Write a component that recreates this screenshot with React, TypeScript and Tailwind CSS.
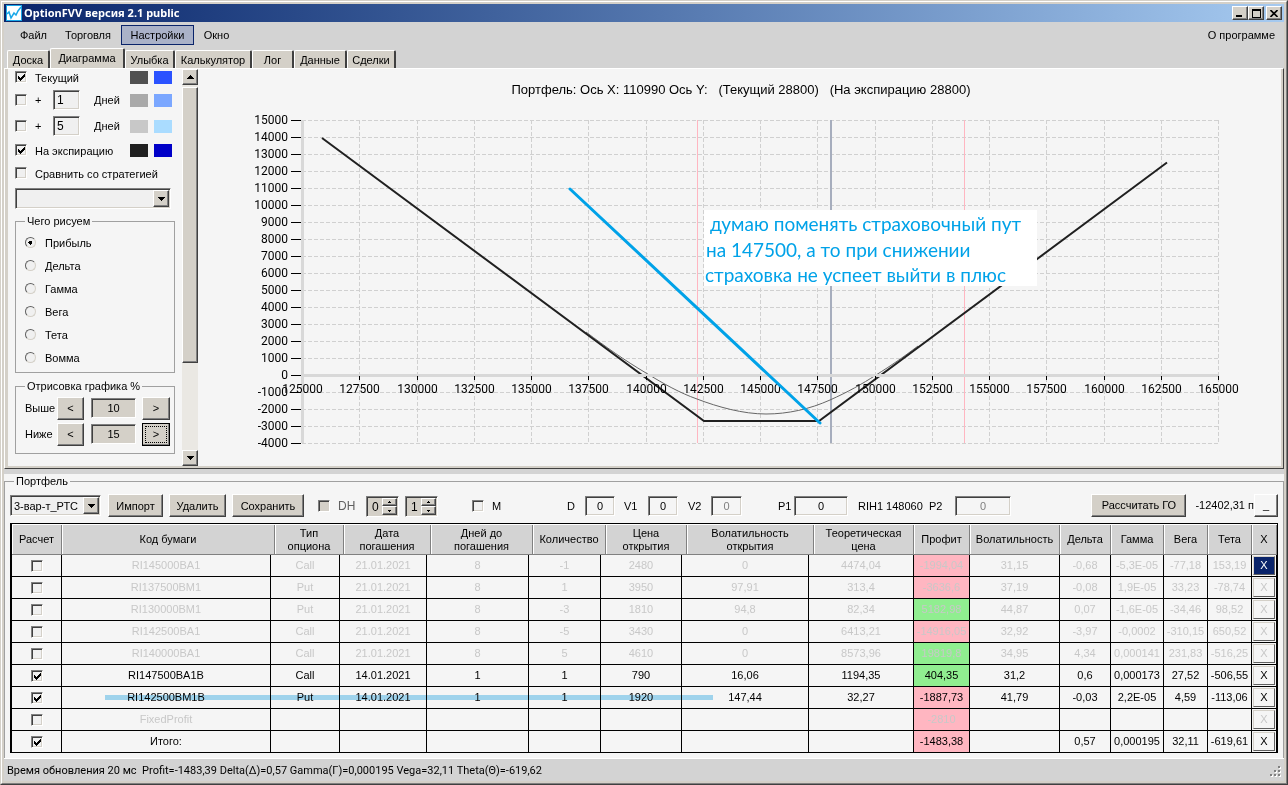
import { useState } from "react";
import type { ReactNode } from "react";
import clsx from "clsx";

type Row = {
  code: string;
  on: boolean;
  cells: string[];
  profit: string;
  tone: "loss" | "gain";
  greeks: string[];
};

// Positions of the portfolio, the last one is the total
const rows: Row[] = [
  { code: "RI145000BA1", on: false, cells: ["Call", "21.01.2021", "8", "-1", "2480", "0", "4474,04"], profit: "-1994,04", tone: "loss", greeks: ["31,15", "-0,68", "-5,3E-05", "-77,18", "153,19"] },
  { code: "RI137500BM1", on: false, cells: ["Put", "21.01.2021", "8", "1", "3950", "97,91", "313,4"], profit: "-3636,6", tone: "loss", greeks: ["37,19", "-0,08", "1,9E-05", "33,23", "-78,74"] },
  { code: "RI130000BM1", on: false, cells: ["Put", "21.01.2021", "8", "-3", "1810", "94,8", "82,34"], profit: "5182,98", tone: "gain", greeks: ["44,87", "0,07", "-1,6E-05", "-34,46", "98,52"] },
  { code: "RI142500BA1", on: false, cells: ["Call", "21.01.2021", "8", "-5", "3430", "0", "6413,21"], profit: "-14916,05", tone: "loss", greeks: ["32,92", "-3,97", "-0,0002", "-310,15", "650,52"] },
  { code: "RI140000BA1", on: false, cells: ["Call", "21.01.2021", "8", "5", "4610", "0", "8573,96"], profit: "19819,8", tone: "gain", greeks: ["34,95", "4,34", "0,000141", "231,83", "-516,25"] },
  { code: "RI147500BA1B", on: true, cells: ["Call", "14.01.2021", "1", "1", "790", "16,06", "1194,35"], profit: "404,35", tone: "gain", greeks: ["31,2", "0,6", "0,000173", "27,52", "-506,55"] },
  { code: "RI142500BM1B", on: true, cells: ["Put", "14.01.2021", "1", "1", "1920", "147,44", "32,27"], profit: "-1887,73", tone: "loss", greeks: ["41,79", "-0,03", "2,2E-05", "4,59", "-113,06"] },
  { code: "FixedProfit", on: false, cells: ["", "", "", "", "", "", ""], profit: "-2810", tone: "loss", greeks: ["", "", "", "", ""] },
  { code: "Итого:", on: true, cells: ["", "", "", "", "", "", ""], profit: "-1483,38", tone: "loss", greeks: ["", "0,57", "0,000195", "32,11", "-619,61"] },
];

const headers = [
  "Расчет", "Код бумаги", "Тип опциона", "Дата погашения", "Дней до погашения", "Количество",
  "Цена открытия", "Волатильность открытия", "Теоретическая цена", "Профит",
  "Волатильность", "Дельта", "Гамма", "Вега", "Тета", "X",
];

const tabs = [
  { name: "Доска", width: "w-[43px]" },
  { name: "Диаграмма", width: "w-[75px]" },
  { name: "Улыбка", width: "w-[50px]" },
  { name: "Калькулятор", width: "w-[77px]" },
  { name: "Лог", width: "w-[42px]" },
  { name: "Данные", width: "w-[53px]" },
  { name: "Сделки", width: "w-[49px]" },
];

const modes = ["Прибыль", "Дельта", "Гамма", "Вега", "Тета", "Вомма"];

const raised =
  "border border-t-white border-l-white border-r-[#404040] border-b-[#404040] shadow-[inset_-1px_-1px_#808080]";
const sunken =
  "border border-t-[#808080] border-l-[#808080] border-r-white border-b-white shadow-[inset_1px_1px_#404040,inset_-1px_-1px_#d4d0c8]";

function Button({ className, children, label }: { className?: string; children: ReactNode; label?: string }) {
  return (
    <button aria-label={label} className={clsx("flex shrink-0 items-center justify-center bg-[#d4d0c8]", raised, className)}>
      {children}
    </button>
  );
}

function Arrow({ up, small }: { up?: boolean; small?: boolean }) {
  return (
    <svg className={small ? "h-[2px] w-[3px]" : "h-1 w-[7px]"} viewBox="0 0 7 4" preserveAspectRatio="none" shapeRendering="crispEdges">
      <path d={up ? "M0 4h7L3.5 0z" : "M0 0h7L3.5 4z"} />
    </svg>
  );
}

function Check({ label, checked, gray }: { label: string; checked?: boolean; gray?: boolean }) {
  return (
    <span className="relative flex size-3 shrink-0">
      <input
        type="checkbox"
        aria-label={label}
        defaultChecked={checked}
        className={clsx("peer size-3 appearance-none", gray ? "bg-[#d4d0c8]" : "bg-[#f0f0f0]", sunken)}
      />
      <svg className="pointer-events-none absolute inset-0 hidden size-3 peer-checked:block" viewBox="0 0 12 12" shapeRendering="crispEdges">
        <path d="M3 5h1v3H3zM4 6h1v3H4zM5 7h1v3H5zM6 6h1v3H6zM7 5h1v3H7zM8 4h1v3H8zM9 3h1v3H9z" />
      </svg>
    </span>
  );
}

function Field({ label, value, className }: { label: string; value: string; className?: string }) {
  return <input aria-label={label} defaultValue={value} className={clsx("min-w-0 shrink-0 text-center", sunken, className)} />;
}

function Combo({ label, value, className }: { label: string; value: string; className?: string }) {
  return (
    <span className={clsx("relative flex h-[21px] shrink-0", className)}>
      <select aria-label={label} className={clsx("w-full appearance-none bg-[#f0f0f0] pl-[3px]", sunken)}>
        <option>{value}</option>
      </select>
      <span className={clsx("pointer-events-none absolute inset-y-0.5 right-0.5 flex w-4 items-center justify-center bg-[#d4d0c8]", raised)}>
        <Arrow />
      </span>
    </span>
  );
}

function Spinner({ label, value }: { label: string; value: string }) {
  return (
    <span className={clsx("flex h-[21px] w-[33px] shrink-0 bg-[#d4d0c8] p-px", sunken)}>
      <input aria-label={label} defaultValue={value} className="w-[14px] pl-1" />
      <span className="flex w-[15px] flex-col">
        <Button label="Больше" className="h-2 w-full"><Arrow up small /></Button>
        <Button label="Меньше" className="h-[9px] w-full"><Arrow small /></Button>
      </span>
    </span>
  );
}

function Swatches({ a, b }: { a: string; b: string }) {
  return (
    <span className="absolute left-[122px] flex gap-[6px]">
      <span className={clsx("h-[13px] w-[18px]", a)} />
      <span className={clsx("h-[13px] w-[18px]", b)} />
    </span>
  );
}

function Sidebar() {
  const [mode, setMode] = useState(modes[0]);

  return (
    <div className="flex shrink-0">
      <div className="w-[174px] overflow-hidden pr-2 pl-[7px]">
        <div className="relative -ml-[7px] flex h-4 items-center gap-2 pl-[7px]">
          <Check label="Текущий" checked />
          <span className="pt-[2px]">Текущий</span>
          <Swatches a="bg-[#505050]" b="bg-[#2a52ff]" />
        </div>
        {[
          { days: "1", a: "bg-[#a9a9a9]", b: "bg-[#7ba7ff]" },
          { days: "5", a: "bg-[#c8c8c8]", b: "bg-[#aadcff]" },
        ].map(d => (
          <div key={d.days} className="relative -ml-[7px] mt-1 flex h-[22px] items-center pl-[7px]">
            <Check label={`+ ${d.days} Дней`} />
            <span className="w-[26px] pl-2">+</span>
            <input aria-label="Дней" defaultValue={d.days} className={clsx("h-5 w-[27px] bg-[#f0f0f0] pl-[3px] text-[12px]", sunken)} />
            <span className="pl-[14px]">Дней</span>
            <Swatches a={d.a} b={d.b} />
          </div>
        ))}
        <div className="relative mt-1 -ml-[7px] flex h-[18px] items-center gap-2 pl-[7px]">
          <Check label="На экспирацию" checked />
          <span className="pt-[2px]">На экспирацию</span>
          <Swatches a="bg-[#202020]" b="bg-[#0000c8]" />
        </div>
        <div className="mt-[7px] flex h-[14px] items-center gap-2 whitespace-nowrap">
          <Check label="Сравнить со стратегией" />
          <span className="pt-[2px]">Сравнить со стратегией</span>
        </div>
        <Combo label="Стратегия" value="" className="mt-[8px] w-[156px]" />

        <fieldset className="mt-[6px] h-[158px] w-[160px] border border-[#a0a0a0] pl-[9px]">
          <legend className="h-3 px-[2px] leading-3">Чего рисуем</legend>
          <div className="pt-1">
            {modes.map(m => (
              <label key={m} className="flex h-[23px] items-center gap-[9px]">
                <input
                  type="radio"
                  name="mode"
                  checked={mode === m}
                  onChange={() => setMode(m)}
                  className="size-[11px] appearance-none rounded-full border border-t-[#606060] border-r-[#d4d0c8] border-b-[#d4d0c8] border-l-[#606060] bg-[#f0f0f0] checked:bg-[radial-gradient(circle,#000_2px,#f0f0f0_2px)]"
                />
                {m}
              </label>
            ))}
          </div>
        </fieldset>

        <fieldset className="mt-[7px] h-[74px] w-[160px] border border-[#a0a0a0] pl-[9px]">
          <legend className="h-3 px-[2px] leading-3">Отрисовка графика %</legend>
          <div className="pt-[3px]">
            {[
              { name: "Выше", value: "10" },
              { name: "Ниже", value: "15" },
            ].map(r => (
              <div key={r.name} className="flex h-[26px] items-center">
                <span className="w-[32px]">{r.name}</span>
                <Button className="h-[23px] w-[27px]">&lt;</Button>
                <Field label={r.name} value={r.value} className="mr-[6px] ml-[7px] h-5 w-[45px] bg-[#d4d0c8]" />
                <Button className={clsx("h-[23px] w-[28px]", r.value === "15" && "outline outline-1 -outline-offset-1 outline-black")}>
                  <span className={clsx("flex h-[17px] w-[22px] items-center justify-center", r.value === "15" && "border border-dotted border-black")}>&gt;</span>
                </Button>
              </div>
            ))}
          </div>
        </fieldset>
      </div>
      <div className="flex w-4 flex-col bg-[#eae8e3]">
        <Button label="Вверх" className="h-4 w-full"><Arrow up /></Button>
        <div className={clsx("mt-[2px] h-[276px] bg-[#d4d0c8]", raised)} />
        <Button label="Вниз" className="mt-auto h-4 w-full"><Arrow /></Button>
      </div>
    </div>
  );
}

function Chart() {
  const xs = Array.from({ length: 17 }, (_, i) => i);
  const ys = Array.from({ length: 20 }, (_, i) => i);
  const px = (i: number) => Math.round(104 + i * 57.25) + 0.5;
  const py = (i: number) => 51.5 + i * 17;

  return (
    <svg className="min-w-0 flex-1 font-['Roboto',sans-serif] text-[12px]" viewBox="0 0 1083 397" role="img" aria-label="Портфель">
      <text x="543" y="25" textAnchor="middle" className="font-['Liberation_Sans',sans-serif] text-[13px]">
        {"Портфель: Ось X: 110990 Ось Y:\u00a0\u00a0 (Текущий 28800)\u00a0\u00a0 (На экспирацию 28800)"}
      </text>
      <g stroke="#d0d0d0" strokeDasharray="4 2" shapeRendering="crispEdges">
        {ys.map(i => <path key={i} d={`M104 ${py(i)}H1020`} />)}
        {xs.map(i => <path key={i} d={`M${px(i)} 51V374`} />)}
      </g>
      <path d="M499.5 51V374M766.5 51V374" stroke="#ffb6c1" />
      <path d="M633 51V374" stroke="#a6adbd" strokeWidth="2" />
      {/* current profit */}
      <path
        d="M388 263C408 278 426 291 448 304C466 315 482 324 499 330C520 338 545 345 568 345C590 345 612 340 632 331C650 323 664 315 678 306C694 296 704 289 720 277"
        fill="none"
        stroke="#666"
      />
      {/* profit at expiration */}
      <path d="M124 69L506 352H621L969 93.500" fill="none" stroke="#202020" strokeWidth="2" />
      <path d="M104.500 51V374M104 306.500H1020" fill="none" stroke="#d8d8d8" strokeWidth="3" />
      <g stroke="#000">
        {ys.map(i => <path key={i} d={`M93 ${py(i)}H103`} />)}
        {xs.slice(1).map(i => <path key={i} d={`M${px(i)} 307V311`} />)}
      </g>
      <g fill="#000">
        {ys.map(i => (
          <text key={i} x="90" y={py(i) + 3} textAnchor="end">{(15 - i) * 1000}</text>
        ))}
        {xs.map(i => (
          <text key={i} x={px(i)} y="324" textAnchor="middle">{125000 + i * 2500}</text>
        ))}
      </g>
      <path d="M372 120L622 354" stroke="#00a2e8" strokeWidth="3" strokeLinecap="round" />
      <path d="M506 141H839V217H506z" fill="#fff" />
      <g fill="#00a2e8" className="font-['Lato',sans-serif] text-[19px]">
        <text x="512" y="162">думаю поменять страховочный пут</text>
        <text x="508" y="188">на 147500, а то при снижении</text>
        <text x="507" y="213">страховка не успеет выйти в плюс</text>
      </g>
    </svg>
  );
}

function PortfolioTable() {
  return (
    <div className="relative mx-[5px] mt-[6px] grow border-t border-r border-l-2 border-black bg-[#f5f5f5]">
      <table className="block">
        <thead className="block">
          <tr className="grid h-[31px] grid-cols-[50px_minmax(120px,1fr)_69px_87px_102px_73px_81px_127px_100px_56px_90px_51px_53px_44px_44px_25px] border-t border-b border-t-white border-b-[#808080] bg-[#d3d3d3]">
            {headers.map(h => (
              <th key={h} className="flex items-center justify-center border-r border-[#808080] px-1 text-center leading-[13px] font-normal shadow-[inset_1px_0_#fff]">
                {h.includes(" ") && h !== "Код бумаги" ? (
                  <span>
                    {h.slice(0, h.lastIndexOf(" "))}
                    <br />
                    {h.slice(h.lastIndexOf(" ") + 1)}
                  </span>
                ) : h}
              </th>
            ))}
          </tr>
        </thead>
        <tbody className="block">
          {rows.map((r, i) => (
            <tr
              key={r.code}
              className={clsx(
                "grid h-[22px] grid-cols-[50px_minmax(120px,1fr)_69px_87px_102px_72px_81px_127px_105px_56px_90px_51px_53px_44px_44px_25px] text-center leading-[21px] *:border-r *:border-b *:border-black",
                !r.on && "text-[#c8c8c8]"
              )}
            >
              <td className="flex items-center justify-center"><Check label={r.code} checked={r.on} /></td>
              <td>{r.code}</td>
              {r.cells.map((c, n) => <td key={n}>{c}</td>)}
              <td className={r.tone === "loss" ? "bg-[#ffb6c1]" : "bg-[#90ee90]"}>{r.profit}</td>
              {r.greeks.map((g, n) => <td key={n}>{g}</td>)}
              <td className="flex">
                <button
                  className={clsx(
                    "m-px grow border border-t-[#d4d0c8] border-r-[#606060] border-b-[#606060] border-l-[#d4d0c8] leading-[17px]",
                    i === 0 && "bg-[#0a246a] text-white"
                  )}
                >
                  X
                </button>
              </td>
            </tr>
          ))}
        </tbody>
      </table>
      {/* marker over the put that is going to be replaced */}
      <div className="pointer-events-none absolute top-[171px] left-[93px] h-[5px] w-[608px] bg-[#a6dcf6] mix-blend-multiply" />
    </div>
  );
}

export default function App() {
  return (
    <div className="flex min-h-screen flex-col border border-t-[#d4d0c8] border-r-[#404040] border-b-[#404040] border-l-[#d4d0c8] bg-[#d4d0c8] font-['Liberation_Sans',sans-serif] text-[11px] leading-[14px] text-black">
      <div className="flex grow flex-col border border-t-white border-r-[#808080] border-b-[#808080] border-l-white p-[2px]">
        {/* title bar */}
        <header className="flex h-[18px] items-center bg-linear-to-r from-[#0a246a] to-[#a6caf0] px-[2px]">
          <svg className="size-4" viewBox="0 0 16 16">
            <path fill="#1aa7e8" d="M0 0h16v16H0z" />
            <path fill="#fff" d="M1 1h14v14H1z" />
            <path d="M1 9l2-2 2 6 3-5 2 2 2-4 3-4" fill="none" stroke="#1aa7e8" strokeWidth="1.500" />
          </svg>
          <h1 className="pl-[2px] font-['Noto_Sans',sans-serif] font-bold text-white">OptionFVV версия 2.1 public</h1>
          <div className="ml-auto flex">
            <Button label="Свернуть" className="h-[14px] w-4">
              <svg className="size-2" viewBox="0 0 8 8"><path d="M0 6h6v2H0z" /></svg>
            </Button>
            <Button label="Развернуть" className="mr-[2px] h-[14px] w-4">
              <svg className="h-[9px] w-[9px]" viewBox="0 0 9 9" shapeRendering="crispEdges"><path d="M0 0h9v9H0zM1 2v6h7V2z" fillRule="evenodd" /></svg>
            </Button>
            <Button label="Закрыть" className="h-[14px] w-4">
              <svg className="h-[7px] w-2" viewBox="0 0 8 7"><path d="M.5 0l7 7M7.500 0l-7 7" stroke="#000" strokeWidth="1.600" /></svg>
            </Button>
          </div>
        </header>

        <nav className="flex h-[26px] items-center bg-[#d3d3d3] pr-[9px] pl-1">
          <button className="w-[48px] pl-[3px]">Файл</button>
          <button className="w-[64px]">Торговля</button>
          <button className="ml-[1px] h-5 w-[73px] border border-[#0a246a] bg-[#aab2c8]">Настройки</button>
          <button className="w-[45px]">Окно</button>
          <button className="ml-auto">О программе</button>
        </nav>

        <div role="tablist" className="flex h-5 items-end bg-[#d3d3d3] pl-[3px]">
          {tabs.map((t, i) => (
            <button
              key={t.name}
              role="tab"
              aria-selected={i === 1}
              className={clsx(
                "shrink-0 rounded-t-[2px] border-t border-r-2 border-l border-t-white border-r-[#404040] border-l-white bg-[#d4d0c8] text-center whitespace-nowrap",
                i === 1 ? "h-5 pb-[2px]" : "h-[18px]",
                t.width
              )}
            >
              {t.name}
            </button>
          ))}
        </div>

        <main className="flex grow flex-col">
          <section className="flex h-[401px] border border-t-white border-r-[#404040] border-b-[#404040] border-l-white bg-[#f5f5f5] shadow-[inset_-1px_-1px_#808080]">
            <div className="flex grow border-r-2 border-b-2 border-l-3 border-[#d4d0c8]">
              <Sidebar />
              <Chart />
            </div>
          </section>

          <div className="h-[5px] bg-[#d3d3d3]" />

          <section className="flex grow flex-col bg-[#f5f5f5]">
            <fieldset className="flex min-w-0 grow flex-col border border-b-0 border-[#a0a0a0]">
              <legend className="ml-[9px] h-[14px] px-[2px]">Портфель</legend>
              <div className="flex h-[29px] items-end overflow-hidden px-[5px]">
                <div className="flex items-center">
                  <Combo label="Портфель" value="3-вар-т_РТС" className="mr-[7px] w-[91px]" />
                  <Button className="mr-[6px] h-[23px] w-[55px]">Импорт</Button>
                  <Button className="mr-[6px] h-[23px] w-[57px]">Удалить</Button>
                  <Button className="h-[23px] w-[72px]">Сохранить</Button>
                </div>
                <div className="ml-[14px] flex h-[23px] shrink-0 items-center text-[#606060]">
                  <Check label="DH" gray />
                  <span className="w-[36px] pl-2 text-[12px]">DH</span>
                </div>
                <div className="flex gap-[6px] text-[12px]">
                  <Spinner label="DH от" value="0" />
                  <Spinner label="DH до" value="1" />
                </div>
                <div className="ml-[34px] flex h-[23px] items-center">
                  <Check label="M" />
                  <span className="w-[83px] pl-2">M</span>
                  <span className="w-[18px]">D</span>
                  <Field label="D" value="0" className="mr-[9px] h-5 w-[30px]" />
                  <span className="w-[24px]">V1</span>
                  <Field label="V1" value="0" className="mr-[10px] h-5 w-[30px]" />
                  <span className="w-[23px]">V2</span>
                  <Field label="V2" value="0" className="mr-[36px] h-5 w-[31px] text-[#808080]" />
                  <span className="w-[16px]">P1</span>
                  <Field label="P1" value="0" className="mr-[10px] h-5 w-[54px]" />
                  <span className="w-[71px] whitespace-nowrap">RIH1 148060</span>
                  <span className="w-[26px]">P2</span>
                  <Field label="P2" value="0" className="h-5 w-[56px] text-[#808080]" />
                </div>
                <div className="ml-auto flex h-6 shrink-0 items-center">
                  <Button className="mr-[9px] h-[23px] w-[95px]">Рассчитать ГО</Button>
                  <span className="whitespace-nowrap">-12402,31 п</span>
                  <button className={clsx("h-[23px] w-6 bg-[#f5f5f5]", raised)}>_</button>
                </div>
              </div>
              <PortfolioTable />
            </fieldset>
          </section>
        </main>

        <footer className="flex h-[23px] items-center justify-between border-t border-white bg-[#d3d3d3] pr-[3px] pl-[3px] pt-[2px] font-['Roboto',sans-serif]">
          <span>Время обновления 20 мс&nbsp; Profit=-1483,39 Delta(Δ)=0,57 Gamma(Γ)=0,000195 Vega=32,11 Theta(Θ)=-619,62</span>
          <svg className="size-3" viewBox="0 0 12 12" shapeRendering="crispEdges">
            <path fill="#fff" d="M10 2h2v2h-2zM6 6h2v2H6zM10 6h2v2h-2zM2 10h2v2H2zM6 10h2v2H6zM10 10h2v2h-2z" />
            <path fill="#808080" d="M9 1h2v2H9zM5 5h2v2H5zM9 5h2v2H9zM1 9h2v2H1zM5 9h2v2H5zM9 9h2v2H9z" />
          </svg>
        </footer>
      </div>
    </div>
  );
}
